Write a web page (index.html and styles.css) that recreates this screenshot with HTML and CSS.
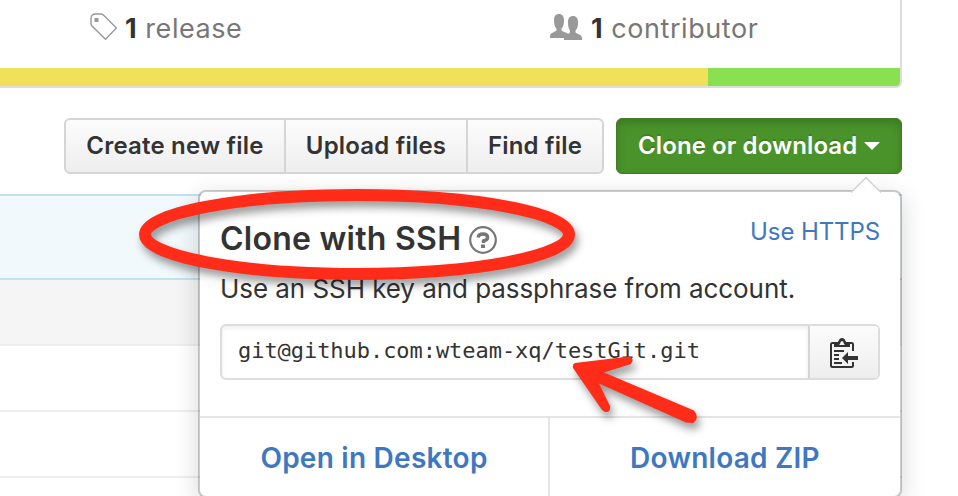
FILE: index.html
```html
<!DOCTYPE html>
<html lang="en">
<head>
<meta charset="utf-8">
<title>wteam-xq/testGit</title>
<link rel="stylesheet" href="styles.css">
</head>
<body>
<main class="page">
  <section class="summary">
    <ul class="stats">
      <li class="stat stat-release">
        <svg class="icon-tag" width="28" height="28" viewBox="0 0 28 28" fill="none" stroke="#999" stroke-width="1.4"><path d="M1 11V5.500Q1 1 5.500 1H11.500L13.500 2L26.400 15L15.500 26.300L2 13Z"/><path d="M4.500 5H8.500V9H4.500Z" fill="#999" stroke="none"/></svg>
        <span class="stat-text"><b>1</b> release</span>
      </li>
      <li class="stat stat-contributor">
        <svg class="icon-people" width="32" height="27" viewBox="0 0 32 27" fill="#999"><path d="M0 24V22C0 19 5 18 6.500 16.500V14.500C4.500 12.500 4 10 4 6C4 2 6 0 9 0S14 2 14 6C14 10 13.500 12.500 11.500 14.500V16.500C13 18 17 18.500 18 20L20 18.500V16.500C18.500 14.500 18 12 18 8C18 4 20 2 23 2S28 4 28 8C28 12 27.500 14.500 25.500 16.500V18.500C27 20 32 20.500 32 24V26H14V24Z"/></svg>
        <span class="stat-text"><b>1</b> contributor</span>
      </li>
    </ul>
    <div class="languages"><span class="lang-js"></span><span class="lang-shell"></span></div>
  </section>

  <div class="toolbar">
    <div class="button-group">
      <button class="btn btn-create"><span>Create new file</span></button>
      <button class="btn btn-upload"><span>Upload files</span></button>
      <button class="btn btn-find"><span>Find file</span></button>
    </div>
    <div class="clone">
      <button class="btn-primary"><span>Clone or download</span><i class="caret"></i></button>
      <section class="popover">
        <svg class="pointer" width="32" height="17" viewBox="0 0 32 17"><path d="M1 16L16 1L31 16V17H1Z" fill="#fff"/><path d="M1 15.500L16 .8L31 15.500" fill="none" stroke="#d2d2d2" stroke-width="1.500"/></svg>
        <div class="popover-body">
          <header class="popover-head">
            <h1>Clone with SSH</h1>
            <svg class="icon-help" width="28" height="28" viewBox="0 0 28 28" fill="none" stroke="#777"><circle cx="14" cy="14" r="12.800" stroke-width="2.200"/><path d="M9.200 11.500Q9.500 8 14 8T18.600 11.500Q18.600 14 14.500 15V17" stroke-width="3.400"/><path d="M12 18.500H16V22H12Z" fill="#777" stroke="none"/></svg>
            <a class="switch">Use HTTPS</a>
          </header>
          <p class="hint">Use an SSH key and passphrase from account.</p>
          <div class="url-row">
            <div class="url">git@github.com:wteam-xq/testGit.git</div>
            <button class="copy" aria-label="Copy">
              <svg width="28" height="30" viewBox="0 0 28 30" fill="none" stroke="#333" stroke-width="2"><path d="M23 13V6.500Q23 5 21.500 5H2.500Q1 5 1 6.500V27.500Q1 29 2.500 29H21.500Q23 29 23 27.500V24"/><path d="M4 9V6Q4 5 6 4.500Q8 4 8.500 3Q9.500 0 12 0T15.500 3Q16 4 18 4.500Q20 5 20 6V9Z" fill="#333" stroke="none"/><path d="M9 7L10 6Q10.500 3 12 3T14 6L15 7Z" fill="#f5f5f5" stroke="none"/><path d="M4 13H14M4 17H9M4 21H9M4 25H12"/><path d="M28 18V22H18V26L12 20L18 14V18Z" fill="#333" stroke="none"/></svg>
            </button>
          </div>
        </div>
        <div class="actions">
          <a class="action action-desktop">Open in Desktop</a>
          <a class="action action-zip">Download ZIP</a>
        </div>
      </section>
    </div>
  </div>

  <div class="files">
    <div class="commit"></div>
    <div class="file file-head"></div>
    <div class="file"></div>
    <div class="file"></div>
    <div class="file"></div>
  </div>

  <svg class="marks" width="958" height="496" viewBox="0 0 958 496">
    <ellipse cx="357" cy="234.500" rx="212" ry="39.500" fill="none" stroke="#ff2c1a" stroke-width="12"/>
    <path d="M575 363L629 356.500Q635 358 631 364L604 372.500L694 410.500Q700 418 693 423L686 422.500L599 383.500L610 406Q611 412 606 412Q603 412 600 407L573 368Q572 364 575 363Z" fill="#ff2c1a"/>
  </svg>
</main>
</body>
</html>
```

FILE: styles.css
```css
* { box-sizing: border-box; }
body { margin: 0; background: #fff; color: #333; font-family: Inter, "Liberation Sans", sans-serif; }
.page { position: relative; width: 958px; height: 496px; overflow: hidden; }
button { font: inherit; letter-spacing: inherit; color: inherit; margin: 0; padding: 0; }
ul, h1, p { margin: 0; padding: 0; }

.summary { width: 902px; height: 88px; border: solid #ddd; border-width: 0 2px 2px 0; border-radius: 0 0 6px 0; overflow: hidden; }
.stats { display: flex; height: 68px; list-style: none; }
.stat { display: flex; height: 56px; align-items: center; white-space: nowrap; font-size: 27px; letter-spacing: .55px; color: #777; }
.stat b { font-weight: 700; color: #333; }
.stat-release { width: 550px; padding-left: 90px; gap: 7px; }
.stat-contributor { gap: 9px; }
.icon-tag { margin-top: -2px; }
.icon-people { margin-top: -2px; }
.languages { display: flex; height: 18px; }
.lang-js { width: 708px; background: #f1e05a; }
.lang-shell { flex: 1; background: #89e051; }

.toolbar { display: flex; width: 902px; height: 56px; margin: 30px 0 20px; padding-left: 64px; gap: 12px; font-size: 24px; font-weight: 600; letter-spacing: .2px; white-space: nowrap; }
.button-group { display: flex; width: 540px; border: 2px solid #d5d5d5; border-radius: 6px; background: linear-gradient(#fcfcfc, #eee); }
.btn { padding-bottom: 2px; border: 0; border-right: 2px solid #d5d5d5; background: none; }
.btn-create { width: 220px; }
.btn-upload { width: 182px; }
.btn-find { flex: 1; border-right: 0; }
.clone { position: relative; flex: 1; }
.btn-primary { display: flex; width: 100%; height: 56px; align-items: center; padding: 0 0 2px 21px; gap: 7px; border: 1px solid #3f7c25; border-radius: 6px; background: #4a932b; color: #fff; letter-spacing: .1px; box-shadow: inset 0 4px 10px rgba(0, 0, 0, .18); text-shadow: 0 -2px 0 rgba(0, 0, 0, .15); }
.caret { margin-top: 2px; border: 8px solid transparent; border-top-color: #fff; border-bottom: 0; }

.popover { position: absolute; z-index: 2; top: 72px; right: 0; width: 704px; height: 308px; border: 2px solid rgba(0, 0, 0, .2); border-radius: 8px; background: #fff; background-clip: padding-box; box-shadow: 0 6px 24px rgba(0, 0, 0, .16); font-weight: 400; letter-spacing: 0; }
.pointer { position: absolute; top: -15px; right: 18px; }
.popover-body { height: 224px; padding: 24px 20px 0; }
.popover-head { display: flex; height: 46px; align-items: center; }
h1 { font-size: 32px; line-height: 46px; font-weight: 600; letter-spacing: .25px; }
.icon-help { margin: 2px 0 0 8px; }
.switch { margin: -16px 0 0 auto; font-size: 24px; letter-spacing: -.1px; color: #4078c0; }
.hint { margin-top: 8px; font-size: 26px; line-height: 38px; letter-spacing: -.06px; }
.url-row { display: flex; height: 56px; margin-top: 16px; border: 2px solid #ddd; border-radius: 6px; overflow: hidden; }
.url { flex: 1; padding-left: 16px; line-height: 49px; font-family: "DejaVu Sans Mono", monospace; font-size: 22px; letter-spacing: -.05px; box-shadow: inset 0 2px 4px rgba(0, 0, 0, .08); }
.copy { display: flex; width: 70px; align-items: center; justify-content: center; padding-top: 2px; border: 0; border-left: 2px solid #d5d5d5; background: linear-gradient(#fcfcfc, #eee); }
.actions { display: flex; height: 80px; border-top: 2px solid #e5e5e5; font-size: 28px; font-weight: 600; letter-spacing: .25px; line-height: 81px; text-align: center; color: #4078c0; }
.action-desktop { width: 350px; border-right: 2px solid #e5e5e5; }
.action-zip { flex: 1; }

.files { width: 902px; }
.commit { height: 86px; border: solid #c5e2ef; border-width: 2px 0; background: #f2f9fc; }
.file { height: 66px; border-bottom: 2px solid #eee; }
.file-head { background: #f5f5f5; }

.marks { position: absolute; z-index: 3; top: 0; left: 0; filter: drop-shadow(3px 6px 4px rgba(0, 0, 0, .4)); pointer-events: none; }
```
